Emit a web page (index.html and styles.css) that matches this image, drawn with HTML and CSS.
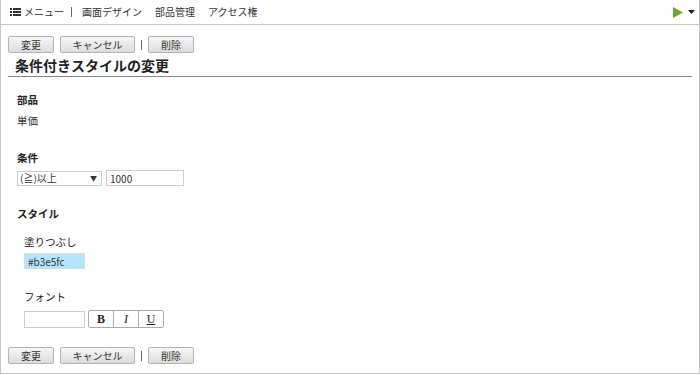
FILE: index.html
```html
<!DOCTYPE html>
<html lang="ja">
<head>
    <meta charset="UTF-8">
    <title>条件付きスタイルの変更</title>
    <link rel="stylesheet" href="styles.css">
</head>
<body>
    <div class="frame">
        <div class="topbar">
            <div class="menu">
                <span class="menu-icon">
                    <svg width="11" height="10" viewBox="0 0 11 10">
                        <rect x="0" y="1" width="2" height="2" fill="#333"/>
                        <rect x="3" y="1" width="8" height="2" fill="#333"/>
                        <rect x="0" y="4" width="2" height="2" fill="#333"/>
                        <rect x="3" y="4" width="8" height="2" fill="#333"/>
                        <rect x="0" y="7" width="2" height="2" fill="#333"/>
                        <rect x="3" y="7" width="8" height="2" fill="#333"/>
                    </svg>
                    メニュー
                </span>
                <span class="sep"></span>
                <span>画面デザイン</span>
                <span>部品管理</span>
                <span>アクセス権</span>
            </div>
            <div class="run">
                <svg width="10" height="11" viewBox="0 0 10 11"><polygon points="0,0 10,5.5 0,11" fill="#6aa833"/></svg>
                <svg width="7" height="4" viewBox="0 0 7 4"><polygon points="0,0 7,0 3.5,4" fill="#222"/></svg>
            </div>
        </div>

        <div class="content">
            <div class="actions">
                <button class="btn btn-short">変更</button>
                <button class="btn btn-long">キャンセル</button>
                <span class="bar"></span>
                <button class="btn btn-short">削除</button>
            </div>
            <h1 class="title">条件付きスタイルの変更</h1>

            <div class="section">
                <div class="label">部品</div>
                <div class="value">単価</div>
            </div>

            <div class="section cond">
                <div class="label">条件</div>
                <div class="row">
                    <div class="select">(≧)以上<span class="arrow">▼</span></div>
                    <input class="field num" type="text" value="1000">
                </div>
            </div>

            <div class="section style">
                <div class="label">スタイル</div>
                <div class="sub">
                    <div class="sublabel">塗りつぶし</div>
                    <input class="field color" type="text" value="#b3e5fc">
                </div>
                <div class="sub font">
                    <div class="sublabel">フォント</div>
                    <div class="row">
                        <input class="field fontname" type="text" value="">
                        <div class="btn-group">
                            <span class="b">B</span>
                            <span class="i">I</span>
                            <span class="u">U</span>
                        </div>
                    </div>
                </div>
            </div>

            <div class="actions bottom">
                <button class="btn btn-short">変更</button>
                <button class="btn btn-long">キャンセル</button>
                <span class="bar"></span>
                <button class="btn btn-short">削除</button>
            </div>
        </div>
    </div>
</body>
</html>
```

FILE: styles.css
```css
body {
    margin: 0;
    font-family: "Noto Sans CJK JP", "Noto Sans", sans-serif;
    font-size: 10.5px;
    line-height: 14px;
    color: #333;
    background: #fff;
}

.frame {
    width: 698px;
    height: 373px;
    border: 1px solid #c8c8c8;
    border-top: none;
}

.topbar {
    height: 24px;
    border-bottom: 1px solid #c8c8c8;
    display: flex;
    align-items: center;
    justify-content: space-between;
    padding: 0 4px 0 9px;
}

.menu {
    display: flex;
    align-items: center;
    gap: 13px;
    font-size: 10px;
    color: #333;
}

.menu-icon {
    display: flex;
    align-items: center;
    gap: 3px;
}

.sep {
    width: 1px;
    height: 10px;
    background: #666;
    margin: 0 -3px 0 -6px;
}

.run {
    display: flex;
    align-items: center;
    gap: 5px;
}

.content {
    padding: 0 7px;
}

.actions {
    display: flex;
    align-items: center;
    gap: 6px;
    margin-top: 11px;
}

.btn {
    height: 17px;
    padding: 0;
    border: 1px solid #b4b4b4;
    border-radius: 2px;
    background: linear-gradient(#f6f6f6, #dcdcdc);
    font-family: inherit;
    font-size: 10px;
    color: #333;
    line-height: 14px;
}

.btn-short {
    width: 46px;
}

.btn-long {
    width: 75px;
}

.bar {
    width: 1px;
    height: 10px;
    background: #666;
}

.title {
    margin: 3px 0 0;
    padding: 0 0 2px 7px;
    font-size: 14px;
    font-weight: bold;
    color: #222;
    line-height: 18px;
    border-bottom: 1px solid #888;
}

.section {
    padding-left: 9px;
}

.label {
    font-weight: bold;
    color: #222;
    margin-top: 16px;
}

.section .value {
    margin-top: 7px;
}

.cond .label {
    margin-top: 23px;
}

.row {
    display: flex;
    align-items: center;
    gap: 4px;
    margin-top: 5px;
}

.select {
    width: 85px;
    height: 15px;
    box-sizing: border-box;
    border: 1px solid #ccc;
    padding-left: 2px;
    display: flex;
    align-items: center;
    justify-content: space-between;
    font-size: 10px;
}

.arrow {
    font-size: 7px;
    margin-right: 4px;
}

.field {
    height: 16px;
    box-sizing: border-box;
    border: 1px solid #ccc;
    font-family: inherit;
    font-size: 10px;
    padding: 0 3px;
    color: #333;
    margin: 0;
}

.num {
    width: 78px;
}

.style .label {
    margin-top: 21px;
}

.sub {
    padding-left: 7px;
}

.sublabel {
    color: #222;
    margin-top: 14px;
}

.color {
    display: block;
    width: 61px;
    margin-top: 4px;
    background: #b3e5fc;
    border-color: #dcdcdc;
}

.font .sublabel {
    margin-top: 21px;
}

.font .row {
    margin-top: 6px;
    gap: 3px;
}

.fontname {
    width: 61px;
    height: 17px;
}

.btn-group {
    display: flex;
    border: 1px solid #aaa;
    border-radius: 2px;
    height: 18px;
    box-sizing: border-box;
}

.btn-group span {
    width: 24px;
    text-align: center;
    font-family: "Liberation Serif", serif;
    font-size: 12px;
    line-height: 16px;
    color: #222;
}

.btn-group span + span {
    border-left: 1px solid #aaa;
}

.btn-group .b {
    font-weight: bold;
}

.btn-group .i {
    font-style: italic;
}

.btn-group .u {
    text-decoration: underline;
}

.bottom {
    margin-top: 19px;
}
```
